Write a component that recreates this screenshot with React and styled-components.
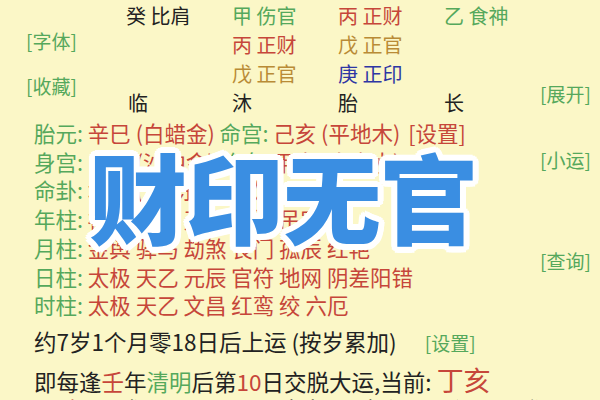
import React from "react";
import styled, { createGlobalStyle } from "styled-components";

const Global = createGlobalStyle`
  html, body { margin: 0; padding: 0; background: #fbf7c7; }
  body { font-family: "Noto Sans CJK SC", "Noto Sans", sans-serif; color: #222; }
`;

const C = {
  green: "#55a85c",
  red: "#c6463a",
  olive: "#b98b36",
  blue: "#2e36a4",
  black: "#222222",
};

const Page = styled.div`
  position: relative;
  width: 600px;
  height: 400px;
  overflow: hidden;
  background: #fbf7c7;
`;

const TopSection = styled.div`
  display: flex;
  padding-top: 1px;
`;

const LeftLinks = styled.div`
  width: 126px;
  box-sizing: border-box;
  padding: 28px 0 0 26px;
  display: flex;
  flex-direction: column;
  gap: 21px;
`;

const Link = styled.span`
  font-size: 19px;
  line-height: 24px;
  color: ${(p) => p.$color || C.green};
  white-space: nowrap;
`;

const Grid = styled.div`
  display: grid;
  grid-template-columns: 106px 106px 106px 96px;
  grid-auto-rows: 29px;
`;

const Cell = styled.div`
  font-size: 20px;
  line-height: 29px;
  color: ${(p) => p.$color || C.black};
  white-space: nowrap;
  padding-left: ${(p) => p.$pad || 0}px;
`;

const RightLinks = styled.div`
  display: flex;
  flex-direction: column;
  padding-top: 81px;
`;

const InfoSection = styled.div`
  display: flex;
  margin-top: 2px;
`;

const InfoMain = styled.div`
  width: 540px;
  box-sizing: border-box;
  padding-left: 34px;
  display: flex;
  flex-direction: column;
`;

const InfoRow = styled.div`
  font-size: 21.5px;
  line-height: 28.7px;
  white-space: nowrap;
  color: ${C.red};
`;

const Label = styled.span`
  color: ${C.green};
`;

const Setting = styled.span`
  margin-left: 8px;
`;

const InfoRight = styled.div`
  display: flex;
  flex-direction: column;
  padding-top: 29px;
  gap: 77px;
`;

const Line = styled.div`
  font-size: 22.5px;
  line-height: 37px;
  white-space: nowrap;
  color: ${C.black};
  display: flex;
  align-items: baseline;
`;

const Tone = styled.span`
  color: ${(p) => p.$color};
  font-size: ${(p) => p.$size || "inherit"};
`;

const SmallLink = styled.span`
  font-size: 19px;
  color: ${C.green};
  margin-left: 28px;
`;

const FirstLine = styled(Line)`
  margin-top: 3px;
`;

const PartialRow = styled.div`
  display: grid;
  grid-template-columns: repeat(7, 80px);
  padding-left: 40px;
  margin-top: -4px;
  font-size: 22px;
  line-height: 24px;
  color: ${C.black};
`;

const PartialItem = styled.span`
  color: ${(p) => p.$color || C.black};
`;

const Title = styled.div`
  position: absolute;
  left: 89px;
  top: 141px;
  font-family: "Noto Sans CJK SC", sans-serif;
  font-weight: 900;
  font-size: 98px;
  line-height: 1.1;
  color: #3a8ee2;
  white-space: nowrap;
  letter-spacing: -1px;
  text-shadow:
    6px 0 0 #fff, -6px 0 0 #fff, 0 6px 0 #fff, 0 -6px 0 #fff,
    4px 4px 0 #fff, -4px 4px 0 #fff, 4px -4px 0 #fff, -4px -4px 0 #fff,
    5.5px 2.5px 0 #fff, -5.5px 2.5px 0 #fff, 5.5px -2.5px 0 #fff, -5.5px -2.5px 0 #fff,
    2.5px 5.5px 0 #fff, -2.5px 5.5px 0 #fff, 2.5px -5.5px 0 #fff, -2.5px -5.5px 0 #fff,
    0 0 3px #fff;
`;

const gridCells = [
  [{ t: "癸 比肩" }, { t: "甲 伤官", c: C.green }, { t: "丙 正财", c: C.red }, { t: "乙 食神", c: C.green }],
  [{ t: "" }, { t: "丙 正财", c: C.red }, { t: "戊 正官", c: C.olive }, { t: "" }],
  [{ t: "" }, { t: "戊 正官", c: C.olive }, { t: "庚 正印", c: C.blue }, { t: "" }],
  [{ t: "临", p: 2 }, { t: "沐" }, { t: "胎" }, { t: "长" }],
];

const infoRows = [
  ["胎元", "辛巳 (白蜡金) ", "命宫", "己亥 (平地木)", "[设置]"],
  ["身宫", "甲午 (沙中金) ", "胎息", "甲申 (泉中水)"],
  ["命卦", "坎卦 (水) 东四命 坎宅"],
  ["年柱", "福星 国印 天厨 亡神 吊客"],
  ["月柱", "金舆 驿马 劫煞 丧门 孤辰 红艳"],
  ["日柱", "太极 天乙 元辰 官符 地网 阴差阳错"],
  ["时柱", "太极 天乙 文昌 红鸾 绞 六厄"],
];

export default function App() {
  return (
    <Page>
      <Global />
      <TopSection>
        <LeftLinks>
          <Link>[字体]</Link>
          <Link>[收藏]</Link>
        </LeftLinks>
        <Grid>
          {gridCells.flat().map((cell, i) => (
            <Cell key={i} $color={cell.c} $pad={cell.p}>
              {cell.t}
            </Cell>
          ))}
        </Grid>
        <RightLinks>
          <Link>[展开]</Link>
        </RightLinks>
      </TopSection>

      <InfoSection>
        <InfoMain>
          {infoRows.map((r, i) => (
            <InfoRow key={i}>
              <Label>{r[0]}: </Label>
              {r[1]}
              {r[2] && <Label>{r[2]}: </Label>}
              {r[3]}
              {r[4] && <Setting>{r[4]}</Setting>}
            </InfoRow>
          ))}
        </InfoMain>
        <InfoRight>
          <Link>[小运]</Link>
          <Link>[查询]</Link>
        </InfoRight>
      </InfoSection>

      <InfoMain>
        <FirstLine>
          约7岁1个月零18日后上运 (按岁累加)
          <SmallLink>[设置]</SmallLink>
        </FirstLine>
        <Line>
          即每逢<Tone $color={C.red}>壬</Tone>年<Tone $color={C.green}>清明</Tone>后第
          <Tone $color={C.red}>10</Tone>日交脱大运,当前:&nbsp;
          <Tone $color={C.red} $size="27px">丁亥</Tone>
        </Line>
      </InfoMain>
      <PartialRow>
        <PartialItem $color={C.red}>丁亥</PartialItem>
        <PartialItem>戊子</PartialItem>
        <PartialItem>己丑</PartialItem>
        <PartialItem>庚寅</PartialItem>
        <PartialItem>辛卯</PartialItem>
        <PartialItem>壬辰</PartialItem>
        <PartialItem>癸巳</PartialItem>
      </PartialRow>

      <Title>财印无官</Title>
    </Page>
  );
}
